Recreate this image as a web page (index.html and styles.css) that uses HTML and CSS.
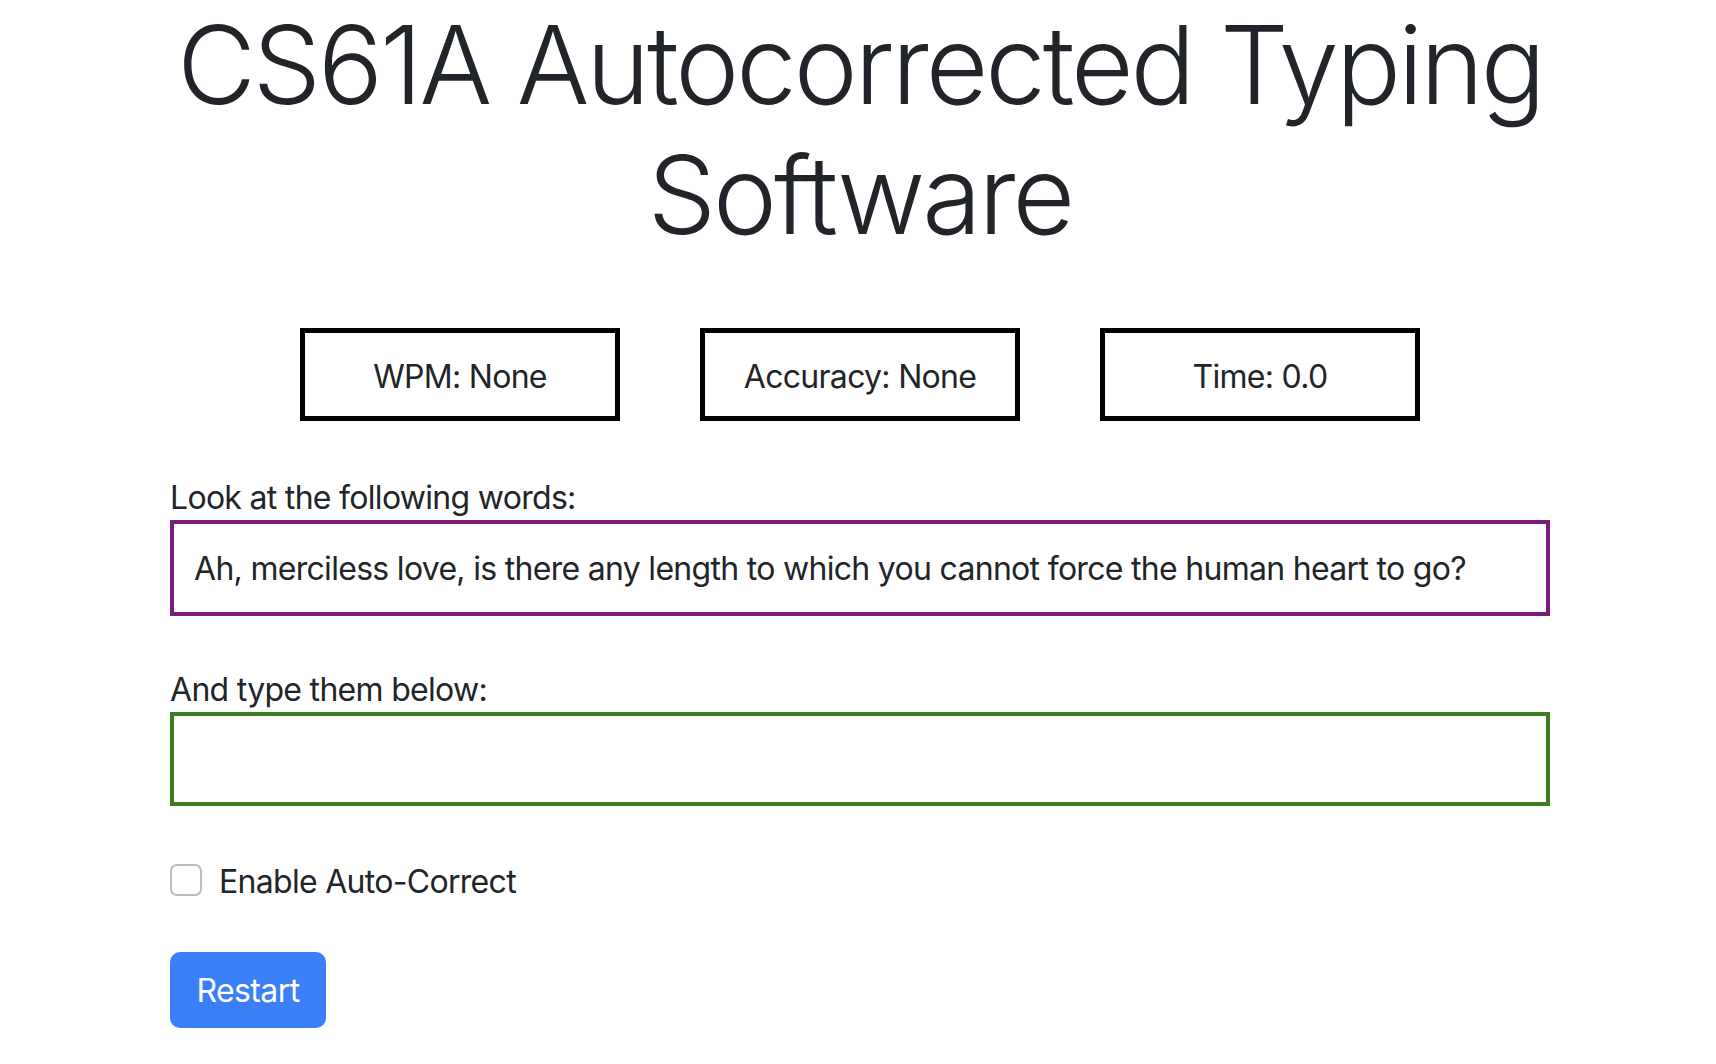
FILE: index.html
```html
<!DOCTYPE html>
<html lang="en">
<head>
<meta charset="utf-8">
<title>CS61A Autocorrected Typing Software</title>
<link rel="stylesheet" href="styles.css">
</head>
<body>
<main class="page">
  <h1 class="title">CS61A Autocorrected Typing Software</h1>
  <div class="stats">
    <div class="stat">WPM: None</div>
    <div class="stat">Accuracy: None</div>
    <div class="stat">Time: 0.0</div>
  </div>
  <div class="field">
    <label class="field-label">Look at the following words:</label>
    <div class="prompt">Ah, merciless love, is there any length to which you cannot force the human heart to go?</div>
  </div>
  <div class="field field-type">
    <label class="field-label" for="typed">And type them below:</label>
    <input class="typed" id="typed" type="text">
  </div>
  <div class="check-row">
    <span class="checkbox"></span>
    <span class="check-label">Enable Auto-Correct</span>
  </div>
  <button class="btn-restart" type="button">Restart</button>
</main>
</body>
</html>
```

FILE: styles.css
```css
html, body {
  margin: 0;
  padding: 0;
  background: #ffffff;
}
body {
  font-family: Inter, "Noto Sans", "Liberation Sans", sans-serif;
  font-size: 32px;
  line-height: 48px;
  color: #212529;
  letter-spacing: -0.7px;
}
.page {
  width: 1380px;
  margin-left: calc(50% - 688px);
}
.title {
  margin: 0 -100px;
  font-size: 108px;
  line-height: 130px;
  font-weight: 300;
  text-align: center;
  color: #212529;
  letter-spacing: -3px;
}
.stats {
  display: flex;
  justify-content: center;
  gap: 80px;
  margin-top: 68px;
}
.stat {
  box-sizing: border-box;
  width: 320px;
  height: 93px;
  padding-top: 4px;
  border: 5px solid #000;
  display: flex;
  align-items: center;
  justify-content: center;
}
.field {
  margin-top: 53px;
  display: flex;
  flex-direction: column;
}
.field-type {
  margin-top: 50px;
}
.field-label {
  display: block;
  margin-bottom: -2px;
}
.prompt {
  border: 4px solid #7b1b80;
  padding: 21px 20px 19px;
  height: 48px;
  white-space: nowrap;
}
.typed {
  box-sizing: border-box;
  height: 94px;
  border: 4px solid #3d7d1f;
  outline: none;
  font: inherit;
  padding: 0 20px;
  margin: 0;
}
.check-row {
  display: flex;
  align-items: center;
  gap: 17px;
  margin-top: 50px;
  height: 48px;
}
.check-label {
  padding-top: 3px;
}
.checkbox {
  box-sizing: border-box;
  width: 32px;
  height: 32px;
  border: 2px solid #b9bcc0;
  border-radius: 7px;
  background: #fff;
}
.btn-restart {
  display: block;
  margin-top: 48px;
  box-sizing: border-box;
  height: 76px;
  width: 156px;
  border: none;
  border-radius: 10px;
  background: #3a7ff6;
  color: #fff;
  font: inherit;
  letter-spacing: -0.6px;
  padding: 2px 0 0;
}
```
